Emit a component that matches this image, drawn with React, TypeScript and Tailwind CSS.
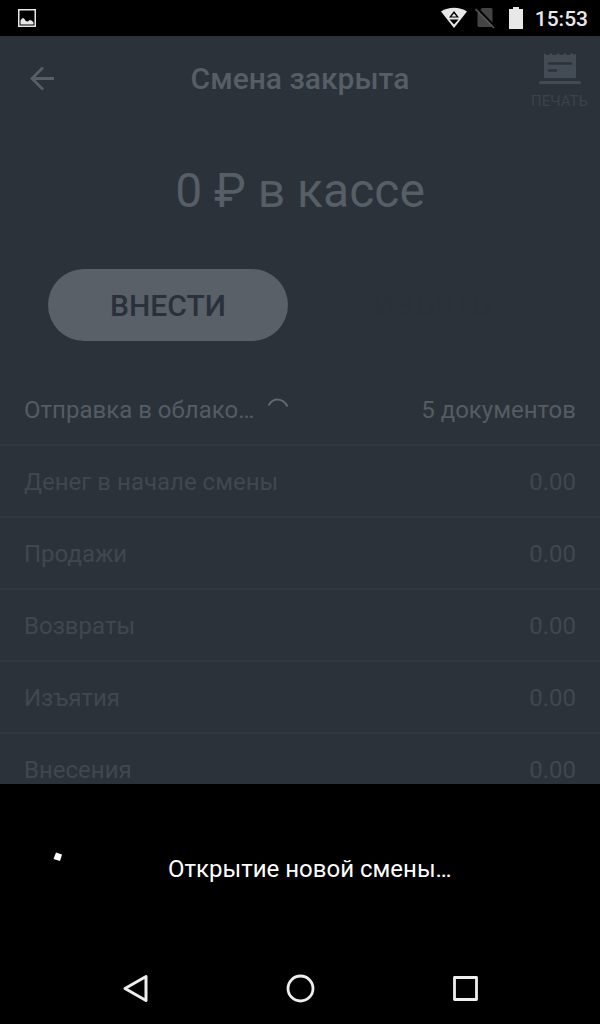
const totals = [
  { label: 'Денег в начале смены', value: '0.00' },
  { label: 'Продажи', value: '0.00' },
  { label: 'Возвраты', value: '0.00' },
  { label: 'Изъятия', value: '0.00' },
  { label: 'Внесения', value: '0.00' },
];

const StatusBar = () => (
  <div className="flex h-9 shrink-0 items-center justify-between bg-black pr-3 pl-[18px] text-[#e8e8e8]">
    <svg width="18" height="18" viewBox="0 0 18 18" aria-hidden="true">
      <rect x="0.75" y="0.75" width="16.5" height="16.5" fill="none" stroke="currentColor" strokeWidth="1.5" />
      <path d="M2.5 15.5v-4l1-1.5 1.5-1 1.5 1 1.2 2 2.3.6 1.5-1.6 2 .4 2 1.8v2.3z" fill="currentColor" />
    </svg>
    <div className="flex items-center">
      <svg width="26" height="22" viewBox="0 0 26 22" aria-hidden="true">
        <path d="M0 4.5C7.5-.5 18.5-.5 26 4.5L13 21z" fill="currentColor" />
        <path d="M13 4L8 10.500h10zM8.500 12.500h9L13 17.500z" fill="#000" />
        <path d="M13 6.500l-2.500 3h5z" fill="currentColor" />
      </svg>
      <svg className="ml-2" width="20" height="22" viewBox="0 0 20 22" aria-hidden="true">
        <path d="M7 1h9a1.500 1.500 0 0 1 1.500 1.500v16A1.500 1.500 0 0 1 16 20H4a1.500 1.500 0 0 1-1.500-1.500V6z" fill="#444" />
        <path d="M2 1l18 18.500" stroke="#000" strokeWidth="2" />
        <path d="M0.500 2l18.500 19" stroke="#555" strokeWidth="1.700" />
      </svg>
      <svg className="ml-[14px]" width="14" height="22" viewBox="0 0 14 22" aria-hidden="true">
        <path d="M4 0h6v2h4v20H0V2h4z" fill="currentColor" />
      </svg>
      <span className="ml-3 pt-0.5 text-[21px] leading-6 font-medium">15:53</span>
    </div>
  </div>
);

const Header = () => (
  <header className="grid h-[86px] grid-cols-[96px_1fr_96px] items-center text-[#565e66]">
    <button type="button" aria-label="Назад" className="flex h-12 items-center pl-[30px]">
      <svg width="24" height="24" viewBox="0 0 24 24" fill="none" stroke="currentColor" strokeWidth="2.8" aria-hidden="true">
        <path d="M24 11.500H2M13 0.500L2 11.500l11 11" />
      </svg>
    </button>
    <h1 className="text-center text-[30px] leading-9 font-medium">Смена закрыта</h1>
    <button type="button" className="flex flex-col items-center gap-1 justify-self-end pt-2 pr-3 text-[#3b434b]">
      <svg width="42" height="32" viewBox="0 0 42 32" aria-hidden="true">
        <path
          d="M5 0l2 2h3L12 0l2 2h3L19 0l2 2h3L26 0l2 2h3L33 0l2 2 2-1.500V25H5z"
          fill="#434c55"
        />
        <path d="M10 10.500h22M10 17.500h7" stroke="#2b323a" strokeWidth="2.500" strokeLinecap="round" />
        <path d="M1.500 29.500h39" stroke="#434c55" strokeWidth="3" strokeLinecap="round" />
      </svg>
      <span className="text-[15px] leading-6">ПЕЧАТЬ</span>
    </button>
  </header>
);

const NavigationBar = () => (
  <nav className="grid h-[72px] shrink-0 grid-cols-[1fr_60px_1fr] items-center bg-black text-[#eee]">
    <button type="button" aria-label="Назад" className="mr-[120px] justify-self-end">
      <svg width="30" height="30" viewBox="0 0 30 30" fill="none" stroke="currentColor" strokeWidth="3" strokeLinejoin="round" aria-hidden="true">
        <path d="M26 3.500v24L5 15.500z" />
      </svg>
    </button>
    <button type="button" aria-label="Домой" className="justify-self-center">
      <svg width="30" height="30" viewBox="0 0 30 30" fill="none" stroke="currentColor" strokeWidth="2.800" aria-hidden="true">
        <circle cx="15.500" cy="15.500" r="12.500" />
      </svg>
    </button>
    <button type="button" aria-label="Недавние" className="ml-[120px] justify-self-start">
      <svg width="30" height="30" viewBox="0 0 30 30" fill="none" stroke="currentColor" strokeWidth="2.800" strokeLinejoin="round" aria-hidden="true">
        <rect x="4.500" y="4.500" width="22" height="22" />
      </svg>
    </button>
  </nav>
);

const App = () => {
  return (
    <div className="flex h-screen flex-col bg-black font-['Roboto',sans-serif]">
      <StatusBar />
      <main className="min-h-0 flex-1 overflow-hidden bg-[#2b323a]">
        <Header />
        <p className="pt-10 text-center text-5xl leading-[58px] text-[#565e66]">0 ₽ в кассе</p>
        <div className="grid grid-cols-2 gap-6 px-12 pt-[49px] pb-[33px] text-[30px] leading-9 font-medium">
          <button type="button" className="h-[72px] rounded-full bg-[#596067] pt-0.5 text-[#2a313a]">
            ВНЕСТИ
          </button>
          <button type="button" className="h-[72px] rounded-full pt-0.5 text-[#2a3139]">
            ИЗЪЯТЬ
          </button>
        </div>
        <table className="w-full border-separate border-spacing-0 text-2xl leading-8 text-[#40484f]">
          <tbody>
            <tr className="text-[#545c64]">
              <th scope="row" className="h-[72px] border-b-2 border-[#313940] pt-0.5 pl-6 text-left font-normal">
                <div className="flex items-center gap-[14px]">
                  Отправка в облако…
                  <svg className="mb-1" width="20" height="20" viewBox="0 0 20 20" fill="none" stroke="#626a71" strokeWidth="2" aria-hidden="true">
                    <path d="M0.500 7.500C5-.5 15-.5 19.500 8.500" />
                  </svg>
                </div>
              </th>
              <td className="border-b-2 border-[#313940] pt-0.5 pr-6 text-right">5 документов</td>
            </tr>
            {totals.map((row) => (
              <tr key={row.label}>
                <th scope="row" className="h-[72px] border-b-2 border-[#313940] pt-0.5 pl-6 text-left font-normal">
                  {row.label}
                </th>
                <td className="border-b-2 border-[#313940] pt-0.5 pr-6 text-right">{row.value}</td>
              </tr>
            ))}
          </tbody>
        </table>
      </main>
      <div role="status" className="flex h-[168px] shrink-0 items-center bg-black px-6 text-white">
        <svg width="96" height="96" viewBox="0 0 96 96" aria-hidden="true">
          <path d="M32 32.500l6 2-2 6.500-6.500-2z" fill="currentColor" />
        </svg>
        <p className="ml-12 pt-0.5 text-2xl leading-8">Открытие новой смены…</p>
      </div>
      <NavigationBar />
    </div>
  );
};

export default App;
